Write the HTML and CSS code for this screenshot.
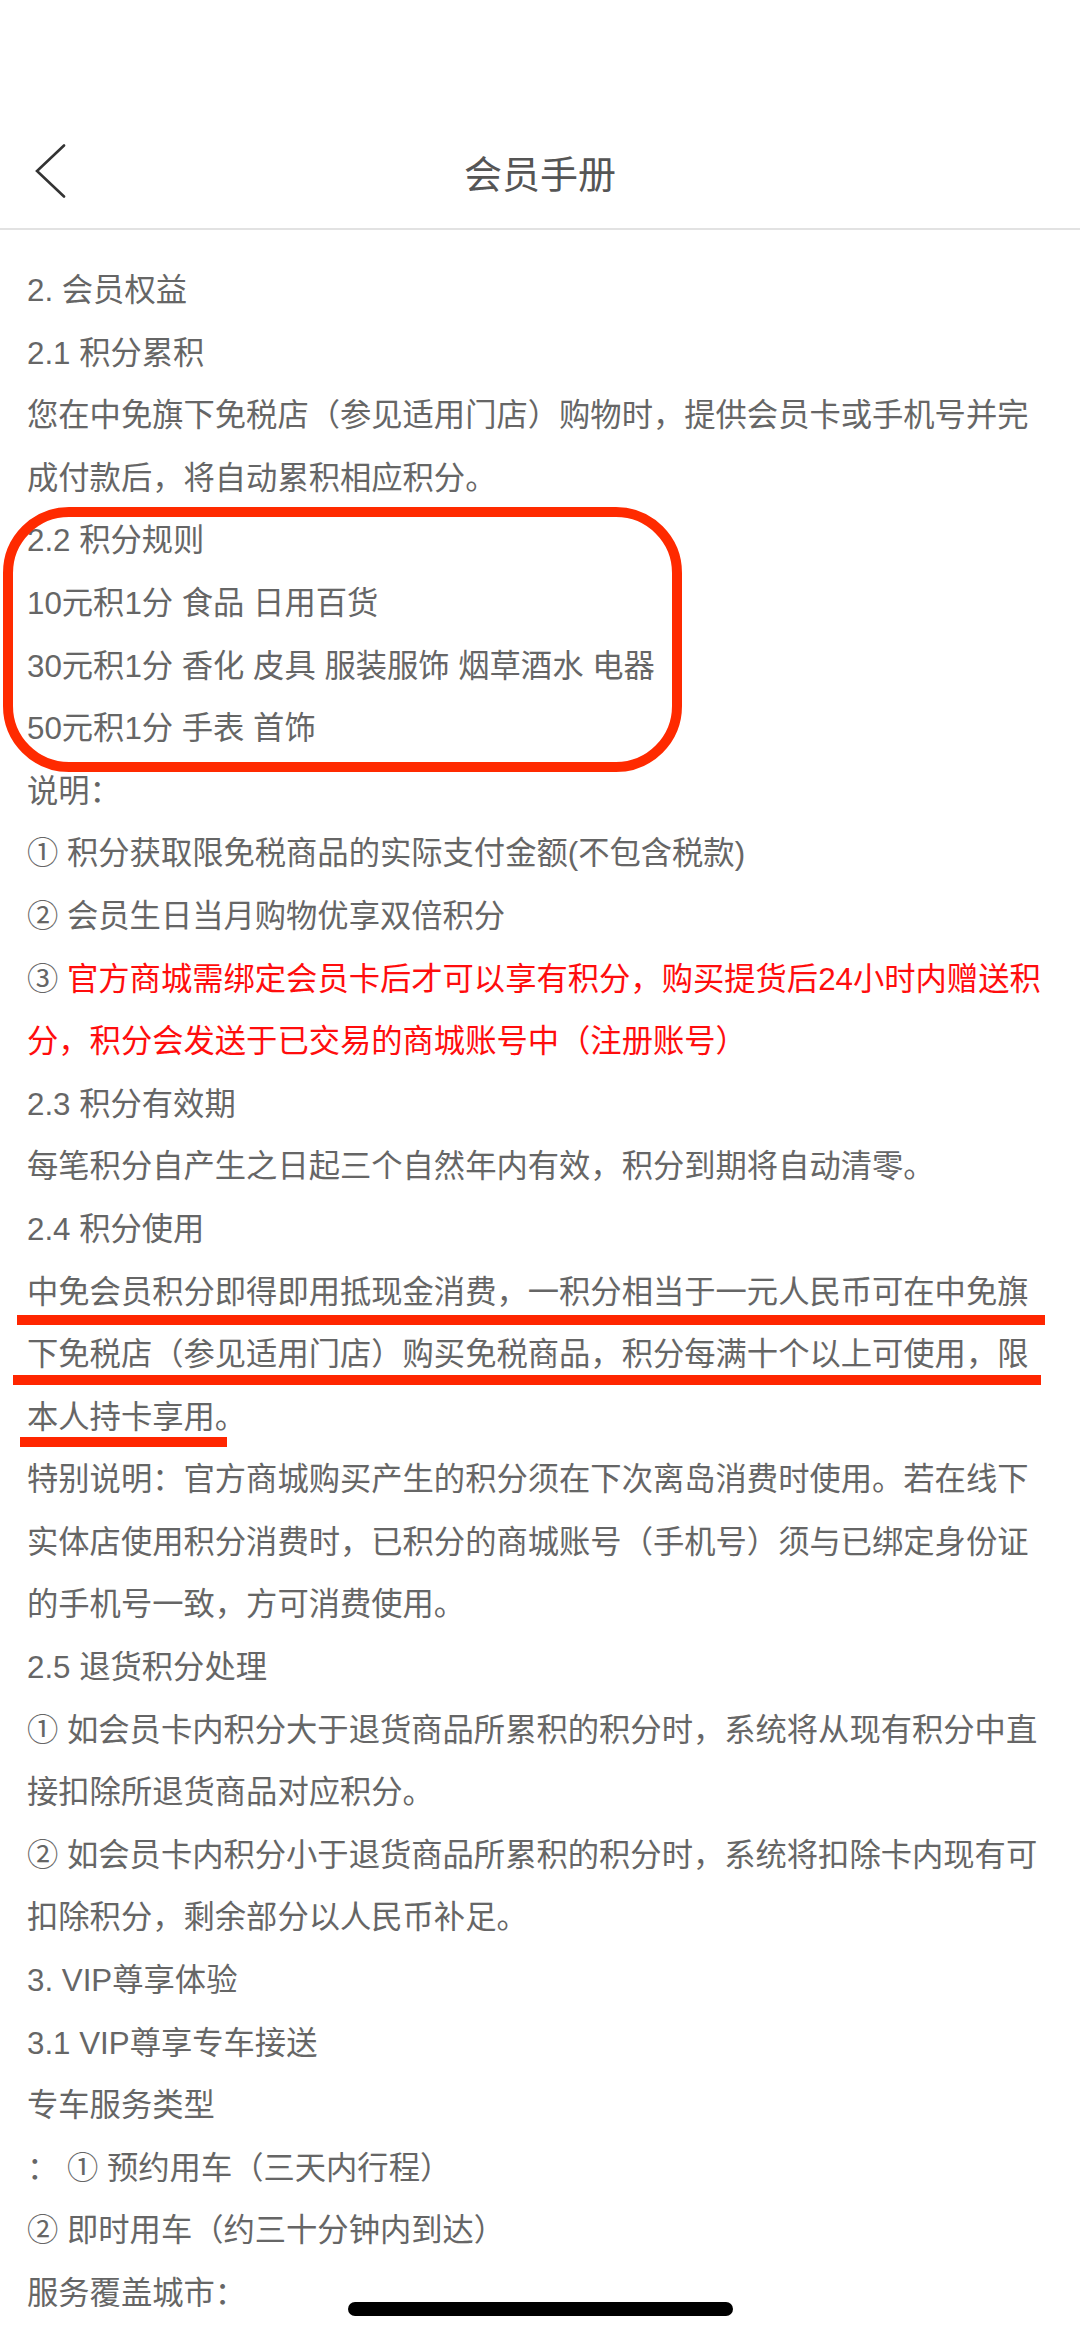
FILE: index.html
```html
<!DOCTYPE html>
<html lang="zh-CN">
<head>
<meta charset="utf-8">
<title>会员手册</title>
<link rel="stylesheet" href="styles.css">
</head>
<body>
<div class="page">
  <div class="statusbar"></div>
  <header class="nav">
    <div class="nav-left">
      <svg class="back" viewBox="0 0 32 54" width="32" height="54" aria-hidden="true">
        <polyline points="30,1.5 3,27 30,52.5" fill="none" stroke="#333" stroke-width="2.6" stroke-linecap="round" stroke-linejoin="miter"/>
      </svg>
    </div>
    <h1 class="nav-title">会员手册</h1>
    <div class="nav-right"></div>
  </header>

  <main class="content">
    <p>2. 会员权益</p>
    <p>2.1 积分累积</p>
    <p>您在中免旗下免税店（参见适用门店）购物时，提供会员卡或手机号并完<br>成付款后，将自动累积相应积分。</p>
    <p>2.2 积分规则</p>
    <p>10元积1分 食品 日用百货</p>
    <p>30元积1分 香化 皮具 服装服饰 烟草酒水 电器</p>
    <p>50元积1分 手表 首饰</p>
    <p>说明：</p>
    <p>① 积分获取限免税商品的实际支付金额(不包含税款)</p>
    <p>② 会员生日当月购物优享双倍积分</p>
    <p>③ <span class="red">官方商城需绑定会员卡后才可以享有积分，购买提货后24小时内赠送积<br>分，积分会发送于已交易的商城账号中（注册账号）</span></p>
    <p>2.3 积分有效期</p>
    <p>每笔积分自产生之日起三个自然年内有效，积分到期将自动清零。</p>
    <p>2.4 积分使用</p>
    <p>中免会员积分即得即用抵现金消费，一积分相当于一元人民币可在中免旗<br>下免税店（参见适用门店）购买免税商品，积分每满十个以上可使用，限<br>本人持卡享用。</p>
    <p>特别说明：官方商城购买产生的积分须在下次离岛消费时使用。若在线下<br>实体店使用积分消费时，已积分的商城账号（手机号）须与已绑定身份证<br>的手机号一致，方可消费使用。</p>
    <p>2.5 退货积分处理</p>
    <p>① 如会员卡内积分大于退货商品所累积的积分时，系统将从现有积分中直<br>接扣除所退货商品对应积分。</p>
    <p>② 如会员卡内积分小于退货商品所累积的积分时，系统将扣除卡内现有可<br>扣除积分，剩余部分以人民币补足。</p>
    <p>3. VIP尊享体验</p>
    <p>3.1 VIP尊享专车接送</p>
    <p>专车服务类型</p>
    <p>： ① 预约用车（三天内行程）</p>
    <p>② 即时用车（约三十分钟内到达）</p>
    <p>服务覆盖城市：</p>
  </main>

  <div class="mark-box"></div>
  <div class="mark-line mark-line-1"></div>
  <div class="mark-line mark-line-2"></div>
  <div class="mark-line mark-line-3"></div>

  <div class="home-indicator"></div>
</div>
</body>
</html>
```

FILE: styles.css
```css
html, body {
  margin: 0;
  padding: 0;
  background: #ffffff;
}

.page {
  position: relative;
  width: 1080px;
  height: 2337px;
  overflow: hidden;
  background: #ffffff;
  font-family: "Liberation Sans", "Noto Sans CJK SC", sans-serif;
}

.statusbar {
  height: 114px;
}

.nav {
  height: 114px;
  display: grid;
  grid-template-columns: 1fr auto 1fr;
  align-items: center;
  border-bottom: 2px solid #e2e2e2;
}

.nav-left {
  display: flex;
  align-items: center;
  padding-left: 34px;
}

.back {
  display: block;
}

.nav-title {
  margin: 0;
  font-family: "Noto Sans CJK SC", sans-serif;
  font-size: 38px;
  font-weight: 400;
  color: #555555;
  letter-spacing: 0;
}

.content {
  padding: 30px 30px 0 27px;
  font-size: 31.3px;
  line-height: 62.6px;
  color: #666666;
}

.content p {
  margin: 0;
  white-space: nowrap;
}

.red {
  color: #ff0d0d;
}

.mark-box {
  position: absolute;
  left: 3px;
  top: 507px;
  width: 679px;
  height: 265px;
  box-sizing: border-box;
  border: 10px solid #ff2a00;
  border-radius: 66px;
}

.mark-line {
  position: absolute;
  height: 10px;
  background: #ff2600;
}

.mark-line-1 {
  left: 17px;
  top: 1315px;
  width: 1028px;
}

.mark-line-2 {
  left: 13px;
  top: 1375px;
  width: 1028px;
}

.mark-line-3 {
  left: 20px;
  top: 1437px;
  width: 207px;
}

.home-indicator {
  position: absolute;
  left: 348px;
  top: 2302px;
  width: 385px;
  height: 14px;
  border-radius: 7px;
  background: #000000;
}
```
